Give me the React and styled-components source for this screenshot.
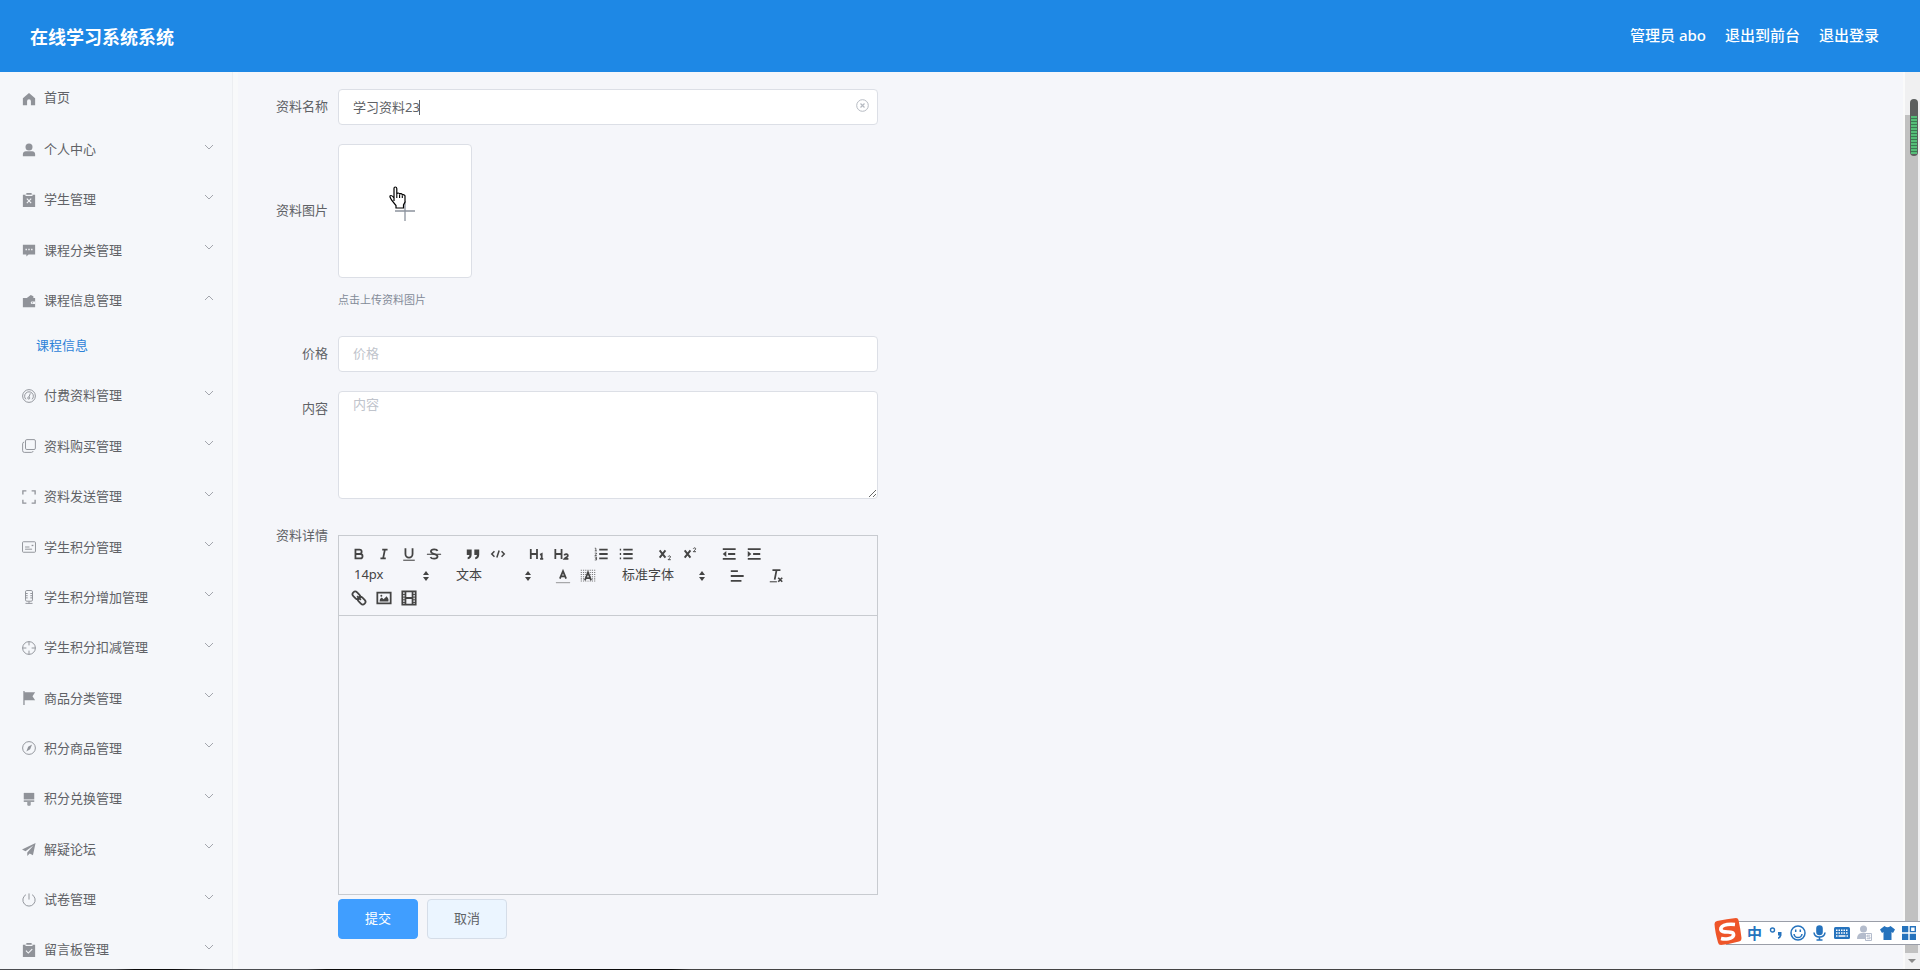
import React, { useState } from "react";
import styled, { createGlobalStyle, css } from "styled-components";

const GlobalStyle = createGlobalStyle`
    * {
        box-sizing: border-box;
    }

    body {
        margin: 0;
        background: #f5f7fa;
        color: #606266;
        font-family: "Noto Sans", "Noto Sans CJK SC", sans-serif;
        font-size: 13px;
        font-weight: 400;
    }

    button,
    input,
    textarea,
    select {
        font: inherit;
        color: inherit;
    }
`;

const Page = styled.div`
    position: relative;
    display: flex;
    flex-direction: column;
    height: 100vh;
    overflow: hidden;
`;

const Header = styled.header`
    display: flex;
    flex: none;
    align-items: center;
    justify-content: space-between;
    height: 72px;
    padding: 0 41px 0 30px;
    background: #1e88e5;
    color: #fff;
`;

const Title = styled.h1`
    margin: 0;
    font-size: 18px;
    font-weight: 700;
`;

const HeaderNav = styled.nav`
    display: flex;
    gap: 19px;
    padding-bottom: 3px;
    font-size: 15px;
    font-weight: 500;

    a {
        color: inherit;
        text-decoration: none;
    }
`;

const Body = styled.div`
    display: flex;
    flex: 1;
    min-height: 0;
`;

const Sidebar = styled.aside`
    flex: none;
    width: 238px;
    overflow: hidden;
    background: #f8f9fa;
`;

const Menu = styled.ul`
    display: flex;
    flex-direction: column;
    width: 233px;
    height: calc(100% + 5px);
    margin: 0;
    padding: 2px 0 0;
    border-right: 1px solid #eceef1;
    background: #f5f7fa;
    list-style: none;
`;

const MenuItem = styled.li`
    flex: 1 0 48px;
    display: flex;
`;

const SubItem = styled.li`
    flex: none;
    height: 45px;
    padding-left: 36px;
    line-height: 38px;

    a {
        color: #2d82d8;
        text-decoration: none;
    }
`;

const MenuButton = styled.button`
    display: flex;
    flex: 1;
    align-items: center;
    gap: 8px;
    padding: 0 18px 0 22px;
    border: 0;
    background: none;
    text-align: left;
    cursor: pointer;
`;

const MenuText = styled.span`
    flex: 1;
    padding-bottom: ${({ $raised }) => ($raised ? "6px" : "2px")};
`;

const MenuIcon = styled.svg`
    flex: none;
    width: 14px;
    height: 14px;
    color: #909399;
`;

const Chevron = styled.svg`
    width: 10px;
    height: 14px;
    padding-bottom: 6px;
    color: #a3a6ad;
    transform: ${({ $open }) => ($open ? "scaleY(-1) translateY(6px)" : "none")};
`;

const Main = styled.main`
    flex: 1;
    min-width: 0;
    padding: 17px 32px 0 32px;
    background: #f5f6fa;
`;

const Form = styled.form`
    display: flex;
    flex-direction: column;
    gap: 19px;
    max-width: 608px;
`;

const FormItem = styled.div`
    display: grid;
    grid-template-columns: 58px 1fr;
    column-gap: 10px;
    align-items: start;
`;

const Label = styled.label`
    line-height: ${({ $tall }) => ($tall ? "132px" : "34px")};
    text-align: right;
    white-space: nowrap;
`;

const InputBox = styled.div`
    position: relative;
`;

const fieldStyle = css`
    display: block;
    width: 100%;
    border: 1px solid #dcdfe6;
    border-radius: 4px;
    background: #fff;
    outline: none;

    &::placeholder {
        color: #c0c4cc;
        opacity: 1;
    }
`;

const Input = styled.input`
    ${fieldStyle}
    height: 36px;
    padding: 0 30px 2px 14px;
`;

const TextArea = styled.textarea`
    ${fieldStyle}
    height: 108px;
    padding: 2px 14px;
    line-height: 20px;
    resize: vertical;
`;

const Caret = styled.span`
    position: absolute;
    top: 11px;
    left: 81px;
    width: 1px;
    height: 15px;
    background: #606266;
`;

const ClearButton = styled.button`
    position: absolute;
    top: 10px;
    right: 9px;
    display: flex;
    padding: 0;
    border: 0;
    background: none;
    color: #b6bac2;
`;

const UploadTile = styled.label`
    position: relative;
    display: flex;
    align-items: center;
    justify-content: center;
    width: 134px;
    height: 134px;
    border: 1px solid #dcdfe6;
    border-radius: 4px;
    background: #fff;
    color: #8c939d;
    cursor: pointer;

    input {
        position: absolute;
        opacity: 0;
        pointer-events: none;
    }
`;

const HandCursor = styled.svg`
    position: absolute;
    top: 41px;
    left: 50px;
    width: 18px;
    height: 23px;
`;

const UploadTip = styled.div`
    margin-top: 12px;
    color: #838b98;
    font-size: 11px;
    line-height: 20px;
    padding-bottom: 7px;
`;

const Editor = styled.div`
    margin-top: 17px;
    border: 1px solid #c8cbd0;
    color: #444;
`;

const Toolbar = styled.div`
    padding: 7px 7px 6px;
    border-bottom: 1px solid #c8cbd0;
`;

const ToolbarRow = styled.div`
    display: flex;
    gap: 14px;
    height: 22px;
`;

const ToolGroup = styled.div`
    display: flex;
`;

const ToolButton = styled.button`
    display: flex;
    align-items: center;
    justify-content: center;
    width: 25px;
    height: 22px;
    padding: 0;
    border: 0;
    background: none;
    cursor: pointer;
`;

const Picker = styled.div`
    position: relative;
    width: ${({ $wide }) => ($wide ? "96px" : "88px")};

    select {
        width: 100%;
        height: 18px;
        padding: 0 20px 0 8px;
        border: 0;
        background: none;
        line-height: 18px;
        appearance: none;
        outline: none;
    }

    svg {
        position: absolute;
        top: 6px;
        right: 4px;
        pointer-events: none;
    }
`;

const EditArea = styled.div`
    height: 278px;
    outline: none;
`;

const Actions = styled.div`
    display: flex;
    gap: 9px;
    margin-top: 4px;
`;

const ActionButton = styled.button`
    width: 80px;
    height: 40px;
    padding: 0 0 4px;
    border: 1px solid ${({ $primary }) => ($primary ? "#409eff" : "#d5dde8")};
    border-radius: 4px;
    background: ${({ $primary }) => ($primary ? "#409eff" : "#ebf5ff")};
    color: ${({ $primary }) => ($primary ? "#fff" : "#606266")};
    cursor: pointer;
`;

const ScrollTrack = styled.div`
    display: flex;
    flex: none;
    flex-direction: column;
    align-items: center;
    width: 17px;
    padding: 43px 2px 7px 0;
    border-left: 2px solid #fafafa;
    background: #f0f0f1;
`;

const ScrollThumb = styled.div`
    flex: 1;
    width: 13px;
    margin-bottom: 6px;
    background: #c1c1c1;
`;

const BatteryPill = styled.div`
    position: absolute;
    top: 99px;
    right: 2px;
    width: 8px;
    height: 57px;
    padding: 17px 1px 2px;
    border-radius: 4px;
    background: #5c5f5e;

    &::before {
        content: "";
        display: block;
        height: 100%;
        background: repeating-linear-gradient(#55bd78 0 2px, #3a7a52 2px 3px);
    }
`;

const InputMethodBar = styled.div`
    position: absolute;
    right: 0;
    bottom: 25px;
    display: flex;
    align-items: center;
    justify-content: space-between;
    width: 194px;
    height: 24px;
    padding: 0 4px 0 21px;
    border: 1px solid #9a9ea8;
    border-width: 1px 0;
    background: #fff;
    color: #2673bd;

    svg {
        flex: none;
    }
`;

const ImeLogo = styled.svg`
    position: absolute;
    left: -13px;
    top: -5px;
`;

const ImeMode = styled.span`
    font-size: 15px;
    font-weight: 700;
    line-height: 22px;
`;

const TaskbarEdge = styled.div`
    position: absolute;
    right: 0;
    bottom: 0;
    left: 0;
    height: 1px;
    background: linear-gradient(90deg, #4a4c50 0 6%, #0b0b0b 7% 9%, #4a4c50 11% 16%, #0b0b0b 17% 35%, #444 36%);
`;

const line = { fill: "none", stroke: "currentColor", strokeWidth: 1.1 };

const icons = {
    home: <path fill="currentColor" d="M8 1 1 7v8h4.800v-4.500a2.200 2.200 0 0 1 4.400 0V15H15V7z" />,
    user: (
        <g fill="currentColor">
            <circle cx="8" cy="4.600" r="4" />
            <path d="M1 15v-2.500A3.500 3.500 0 0 1 4.500 9.500h7a3.500 3.500 0 0 1 3.500 3V15z" />
        </g>
    ),
    release: (
        <>
            <path fill="currentColor" d="M1 2h4V0h6v2h4v14H1z" />
            <path d="M4 2.700h8M5.500 6.500l5 5M10.500 6.500l-5 5" stroke="#f5f7fa" strokeWidth="1.300" />
        </>
    ),
    comment: (
        <>
            <path fill="currentColor" d="M1 2h14v11H7.500L5 15.500V13H1z" />
            <path d="M4 7.500h1.600M7.200 7.500h1.600M10.400 7.500H12" stroke="#f5f7fa" strokeWidth="1.600" />
        </>
    ),
    wallet: (
        <>
            <path fill="currentColor" d="M1 4.500h4.500L10 1l3 1.500v2h2V15H1z" />
            <path d="M15 8.500h-3.500a1.500 1.500 0 0 0 0 3H15" fill="#f5f7fa" />
            <circle cx="12" cy="10" r=".7" fill="currentColor" />
        </>
    ),
    odometer: (
        <g {...line}>
            <circle cx="8" cy="8" r="7.300" />
            <path d="M4.500 11.800A5 5 0 1 1 11.500 11.800" />
            <path d="M9.500 5 8 9" />
            <circle cx="7.700" cy="10.300" r="1.200" />
        </g>
    ),
    copy: (
        <g {...line}>
            <rect x="4" y=".7" width="11.300" height="11.300" rx="1.500" />
            <path d="M2.600 3.500Q.7 3.700.7 5.500v7.800q0 2 2 2h8q1.800 0 2-1.500" />
        </g>
    ),
    fullscreen: (
        <path {...line} strokeWidth="1.500" d="M1 5V1h4M11 1h4v4M15 11v4h-4M5 15H1v-4" />
    ),
    postcard: (
        <g {...line}>
            <rect x=".6" y="2" width="14.800" height="12" rx="1" />
            <path d="M3.500 8h5M3.500 10.500h8" />
            <path d="M11 5.500h2V7h-2z" fill="currentColor" stroke="none" />
        </g>
    ),
    microphone: (
        <g {...line}>
            <rect x="4" y=".6" width="8" height="12.200" rx="1.500" />
            <path d="M8 13v2.500M4 15.300h8M4 4h2.500M4 6.500h2.500M4 9h2.500M12 4H9.500M12 6.500H9.500M12 9H9.500" />
        </g>
    ),
    aim: (
        <g {...line}>
            <circle cx="8" cy="8" r="7.300" />
            <path d="M8 .7V5M8 11v4.300M.7 8H5M11 8h4.300" />
        </g>
    ),
    flag: <path fill="currentColor" d="M1.500 0H3v1.500h12L12 6l3 4.500H3V16H1.500z" />,
    compass: (
        <>
            <circle {...line} cx="8" cy="8" r="7.300" />
            <path fill="currentColor" d="M11.500 4 9.300 9.500 5 12l2-5.500z" />
        </>
    ),
    brush: (
        <g fill="currentColor">
            <path d="M2 1h12v7.500H2z" />
            <path d="M2 9.500h12v2h-4V15l-2 1-2-1v-3.500H2z" opacity=".9" />
        </g>
    ),
    promotion: <path fill="currentColor" d="M15.500 1 0 8.500l4 2L13 4l-7 8v4l2.800-3 3.700 2z" />,
    power: (
        <path {...line} d="M8 .5v7M4.500 1.900a7 7 0 1 0 7 0" />
    ),
    claim: (
        <>
            <path fill="currentColor" d="M1 2h4V0h6v2h4v14H1z" />
            <path d="M4 2.700h8M4.500 8.800l2.700 2.700 4.500-4.500" fill="none" stroke="#f5f7fa" strokeWidth="1.300" />
        </>
    )
};

const menu = [
    { text: "首页", icon: "home", single: true },
    { text: "个人中心", icon: "user" },
    { text: "学生管理", icon: "release" },
    { text: "课程分类管理", icon: "comment" },
    { text: "课程信息管理", icon: "wallet", children: ["课程信息"] },
    { text: "付费资料管理", icon: "odometer" },
    { text: "资料购买管理", icon: "copy" },
    { text: "资料发送管理", icon: "fullscreen" },
    { text: "学生积分管理", icon: "postcard" },
    { text: "学生积分增加管理", icon: "microphone" },
    { text: "学生积分扣减管理", icon: "aim" },
    { text: "商品分类管理", icon: "flag" },
    { text: "积分商品管理", icon: "compass" },
    { text: "积分兑换管理", icon: "brush" },
    { text: "解疑论坛", icon: "promotion" },
    { text: "试卷管理", icon: "power" },
    { text: "留言板管理", icon: "claim" }
];

// editor icons share one 18x18 grid
const tools = {
    bold: <path d="M5 4h4.500a2.500 2.500 0 0 1 0 5H5zM5 9h5.500a2.500 2.500 0 0 1 0 5H5z" />,
    italic: <path d="M7 4h6M5 14h6M8 14l2-10" />,
    underline: (
        <>
            <path d="M5 2.500V9a4 4 0 0 0 8 0V2.500" />
            <path d="M2.500 16h13" strokeWidth="1.200" />
        </>
    ),
    strike: (
        <>
            <path d="M13 5.500C12 3 6 3 5.500 6c0 2 2 2.500 3.500 3s4 1 4 3c-.5 3-6.500 3-8 .5" />
            <path d="M1 9.300h16" strokeWidth="1.200" />
        </>
    ),
    quote: (
        <g fill="currentColor" stroke="none">
            <path d="M2 4h5.500v5.500Q7.500 14 3 15v-2.300q2-.7 2-2.700H2z" />
            <path d="M10.500 4H16v5.500q0 4.500-4.500 5.500v-2.300q2-.7 2-2.700h-3z" />
        </g>
    ),
    code: <path d="M5 6 2 9l3 3M13 6l3 3-3 3M10.300 5 7.700 13" strokeWidth="1.700" />,
    h1: <path d="M2 3.500v11M9 3.500v11M2 9h7M12.500 10l1.800-1v5.500M12.500 14.400H16" />,
    h2: <path d="M1.500 3.500v11M8.500 3.500v11M1.500 9h7M11.500 10.500c1-2 4.300-1.500 4 .5-.2 1.500-2.500 2-3.700 3.500h4.400" />,
    ordered: (
        <>
            <path d="M7 4h9.500M7 9h9.500M7 14h9.500" />
            <path d="M2 2.500h1.200v3M2 5.500h2.300M2 8h2v1L2 10.800h2.300M2 12.500h2v3.200H2M2.500 14H4" strokeWidth=".9" />
        </>
    ),
    bullet: <path d="M6 4h10.500M6 9h10.500M6 14h10.500M2 4h1.500M2 9h1.500M2 14h1.500" />,
    sub: (
        <>
            <path d="m3 5 6.500 8M9.500 5 3 13" strokeWidth="2.200" />
            <path d="M12.500 12c.5-1.500 3-1 2.700.4-.2 1-1.700 1.500-2.700 3h3" strokeWidth="1.100" />
        </>
    ),
    sup: (
        <>
            <path d="m3 5 6.500 8M9.500 5 3 13" strokeWidth="2.200" />
            <path d="M12.700 3c.5-1.500 3-1 2.700.4-.2 1-1.700 1.500-2.700 3h3" strokeWidth="1.100" />
        </>
    ),
    outdent: (
        <>
            <path d="M2 3.500h14.500M8 9h8M2 14.500h14.500" />
            <path d="m6 5.500-4 3.500 4 3.500z" fill="currentColor" stroke="none" />
        </>
    ),
    indent: (
        <>
            <path d="M2 3.500h14.500M8 9h8M2 14.500h14.500" />
            <path d="m2 5.500 4 3.500-4 3.500z" fill="currentColor" stroke="none" />
        </>
    ),
    color: (
        <>
            <path d="M5.500 12 9 3.500l3.500 8.500M6.500 9.500h5" />
            <path d="M1 16.500h16" strokeWidth="1.200" opacity=".5" />
        </>
    ),
    background: (
        <>
            <path d="M1.500 2v14M4 2v14M6.500 2v14M9 2v14M11.500 2v14M14 2v14M16.500 2v14" strokeWidth="1.300" strokeDasharray="1.200 1.200" opacity=".7" />
            <path d="M9 3 4.500 14h9z" fill="#f5f6fa" stroke="none" />
            <path d="M5.500 14 9 5l3.500 9M6.500 11.500h5" />
        </>
    ),
    align: <path d="M2 3.500h8M2 9h14.500M2 14.500h12" />,
    clean: (
        <>
            <path d="M5 2.500h9M9.500 3 7.500 13" />
            <path d="M2 15.500h8" strokeWidth="1.200" />
            <path d="m11.500 11 4.500 4.500M16 11l-4.500 4.500" strokeWidth="1.900" />
        </>
    ),
    link: (
        <g transform="rotate(45 9 9)">
            <rect x="0" y="6" width="9.500" height="6" rx="3" />
            <rect x="8.500" y="6" width="9.500" height="6" rx="3" />
            <path d="M6 9h6" />
        </g>
    ),
    image: (
        <>
            <path d="M1.500 3h15v12h-15z" />
            <path d="m4 13 .5-3 2-1.500 2 2L12 7l2 3v3z" fill="currentColor" stroke="none" />
            <circle cx="6" cy="6.500" r="1.100" fill="currentColor" stroke="none" />
        </>
    ),
    video: (
        <>
            <path d="M1.500 1.500h15v15h-15z" />
            <path d="M5 2v14M13 2v14M5 9h8" />
            <path d="M1.500 5H5M1.500 8H5M1.500 11H5M1.500 14H5M13 5h3.500M13 8h3.500M13 11h3.500M13 14h3.500" strokeWidth="1.100" />
        </>
    )
};

const firstRow = [
    [["bold", "加粗"], ["italic", "斜体"], ["underline", "下划线"], ["strike", "删除线"]],
    [["quote", "引用"], ["code", "代码"]],
    [["h1", "标题一"], ["h2", "标题二"]],
    [["ordered", "有序列表"], ["bullet", "无序列表"]],
    [["sub", "下标"], ["sup", "上标"]],
    [["outdent", "减少缩进"], ["indent", "增加缩进"]]
];

const Tools = ({ items }) => (
    <ToolGroup>
        {items.map(([name, label]) => (
            <ToolButton key={name} type="button" aria-label={label}>
                <svg width="16" height="16" viewBox="0 0 18 18" fill="none" stroke="currentColor" strokeWidth="2">
                    {tools[name]}
                </svg>
            </ToolButton>
        ))}
    </ToolGroup>
);

const ToolPicker = ({ label, value, wide }) => (
    <Picker $wide={wide}>
        <select aria-label={label} defaultValue={value}>
            <option>{value}</option>
        </select>
        <svg width="8" height="10" viewBox="0 0 8 10" fill="currentColor">
            <path d="M4 0 7 4H1zM4 10 1 6h6z" />
        </svg>
    </Picker>
);

const SideMenu = () => (
    <Sidebar>
        <Menu>
            {menu.map(({ text, icon, single, children }) => (
                <React.Fragment key={text}>
                    <MenuItem>
                        <MenuButton type="button">
                            <MenuIcon viewBox="0 0 16 16">{icons[icon]}</MenuIcon>
                            <MenuText $raised={single}>{text}</MenuText>
                            {!single && (
                                <Chevron viewBox="0 0 10 8" $open={!!children} fill="none" stroke="currentColor">
                                    <path d="m1 2 4 4 4-4" />
                                </Chevron>
                            )}
                        </MenuButton>
                    </MenuItem>
                    {children &&
                        children.map(el => (
                            <SubItem key={el}>
                                <a href="#course">{el}</a>
                            </SubItem>
                        ))}
                </React.Fragment>
            ))}
        </Menu>
    </Sidebar>
);

const RichEditor = () => (
    <Editor>
        <Toolbar>
            <ToolbarRow>
                {firstRow.map((items, idx) => (
                    <Tools key={idx} items={items} />
                ))}
            </ToolbarRow>
            <ToolbarRow>
                <ToolPicker label="字号" value="14px" />
                <ToolPicker label="段落" value="文本" />
                <Tools items={[["color", "文字颜色"], ["background", "背景颜色"]]} />
                <ToolPicker label="字体" value="标准字体" wide />
                <Tools items={[["align", "对齐"]]} />
                <Tools items={[["clean", "清除格式"]]} />
            </ToolbarRow>
            <ToolbarRow>
                <Tools items={[["link", "链接"], ["image", "图片"], ["video", "视频"]]} />
            </ToolbarRow>
        </Toolbar>
        <EditArea id="detail" role="textbox" aria-labelledby="detail-label" contentEditable suppressContentEditableWarning />
    </Editor>
);

const InputMethod = () => (
    <InputMethodBar>
        <ImeLogo width="29" height="29" viewBox="0 0 29 29">
            <path d="M4 4Q14 2 23 1q2 0 2.500 2 2 9 3 18 0 3-2.500 3.500Q17 27 8 28q-2.500 0-3-2.500Q2 15 1.500 7q0-2.500 2.500-3z" fill="#ee5529" />
            <path d="M22 7.500Q10 6.500 8 11c-1 4 3.500 4 7 4s6 .5 5.500 3.500C19.500 22 12 22.500 8 21.500" fill="none" stroke="#fff" strokeWidth="3.600" />
        </ImeLogo>
        <ImeMode>中</ImeMode>
        <svg width="13" height="14" viewBox="0 0 13 14" fill="none" stroke="currentColor">
            <circle cx="3.500" cy="4" r="2" strokeWidth="1.400" />
            <path d="M9 6h3.500v3.500Q12 12 9 13v-1.500q1.500-.8 1.500-2H9z" fill="currentColor" stroke="none" />
        </svg>
        <svg width="16" height="16" viewBox="0 0 16 16" fill="none" stroke="currentColor" strokeWidth="1.500">
            <circle cx="8" cy="8" r="7" />
            <path d="M4 9q.5 3.500 4 3.500T12 9M5.700 4.500v2.500M10.300 4.500v2.500" />
        </svg>
        <svg width="13" height="16" viewBox="0 0 13 16" fill="none" stroke="currentColor" strokeWidth="1.600">
            <rect x="4" y="1" width="5" height="8.500" rx="2.500" fill="currentColor" />
            <path d="M1 7.500q.5 4.500 5.500 4.500T12 7.500M6.500 12v3M3.500 15h6" />
        </svg>
        <svg width="16" height="12" viewBox="0 0 16 12">
            <rect width="16" height="12" rx="1.500" fill="currentColor" />
            <path d="M2 3.200h12M2 6h12" stroke="#fff" strokeWidth="1.500" strokeDasharray="1.500 1" />
            <path d="M2 9h1.500M4.500 9h7M12.500 9H14" stroke="#fff" strokeWidth="1.400" />
        </svg>
        <svg width="15" height="16" viewBox="0 0 15 16" fill="#b4bccc">
            <circle cx="6.500" cy="4" r="3.500" />
            <path d="M0 14q0-5 4-6h5q2 .5 3 2H8v4z" />
            <path d="M8.500 8.500h6v7h-6z" fill="#fff" stroke="#b4bccc" />
            <path d="M13.300 10.200H10v1.700h3v1.800H9.700" fill="none" stroke="#b4bccc" />
        </svg>
        <svg width="15" height="14" viewBox="0 0 15 14" fill="currentColor">
            <path d="M4.500 0q3 2.500 6 0L15 3.500l-2 3.500-1.500-1v8h-8V6L2 7 0 3.500z" />
        </svg>
        <svg width="14" height="14" viewBox="0 0 14 14" fill="currentColor">
            <path d="M0 0h6.300v6.300H0zM0 7.700h6.300V14H0zM7.700 7.700H14V14H7.700z" />
            <path d="M8.400.7h4.900v4.900H8.400z" fill="none" stroke="currentColor" strokeWidth="1.400" />
        </svg>
    </InputMethodBar>
);

const App = () => {
    const [name, setName] = useState("学习资料23");

    return (
        <Page>
            <GlobalStyle />
            <Header>
                <Title>在线学习系统系统</Title>
                <HeaderNav>
                    <span>管理员 abo</span>
                    <a href="#front">退出到前台</a>
                    <a href="#logout">退出登录</a>
                </HeaderNav>
            </Header>
            <Body>
                <SideMenu />
                <Main>
                    <Form onSubmit={e => e.preventDefault()}>
                        <FormItem>
                            <Label htmlFor="name">资料名称</Label>
                            <InputBox>
                                <Input id="name" value={name} placeholder="资料名称" onChange={e => setName(e.target.value)} />
                                <Caret />
                                <ClearButton type="button" aria-label="清空" onClick={() => setName("")}>
                                    <svg width="13" height="13" viewBox="0 0 13 13" fill="none" stroke="currentColor">
                                        <circle cx="6.500" cy="6.500" r="5.800" />
                                        <path d="m4.500 4.500 4 4M8.500 4.500l-4 4" strokeWidth="1.200" />
                                    </svg>
                                </ClearButton>
                            </InputBox>
                        </FormItem>
                        <FormItem>
                            <Label htmlFor="picture" $tall>资料图片</Label>
                            <div>
                                <UploadTile>
                                    <input id="picture" type="file" accept="image/*" tabIndex={-1} />
                                    <svg width="20" height="20" viewBox="0 0 20 20" stroke="currentColor" strokeWidth="1.300">
                                        <path d="M10 0v20M0 10h20" />
                                    </svg>
                                    <HandCursor viewBox="0 0 18 23">
                                        <path
                                            d="M5 15V2.500Q5 1 6.300 1t1.500 1.500V8q0-1 1.400-1t1.400 1.300q.2-.8 1.500-.6t1.200 1.500q.4-.7 1.600-.4T16 10v6l-1.500 3v3H7v-2.500L2.500 14 1 11q-.3-1.500 1-1.500T5 12z"
                                            fill="#fff"
                                            stroke="#000"
                                            strokeWidth="1.200"
                                        />
                                        <path d="M7.800 8v4M10.600 8.500V12M13.300 9.500V12" stroke="#000" strokeWidth="1.100" />
                                    </HandCursor>
                                </UploadTile>
                                <UploadTip>点击上传资料图片</UploadTip>
                            </div>
                        </FormItem>
                        <FormItem>
                            <Label htmlFor="price">价格</Label>
                            <Input id="price" placeholder="价格" />
                        </FormItem>
                        <FormItem>
                            <Label htmlFor="content">内容</Label>
                            <TextArea id="content" placeholder="内容" />
                        </FormItem>
                        <FormItem>
                            <Label as="span" id="detail-label">资料详情</Label>
                            <div>
                                <RichEditor />
                                <Actions>
                                    <ActionButton type="submit" $primary>提交</ActionButton>
                                    <ActionButton type="button">取消</ActionButton>
                                </Actions>
                            </div>
                        </FormItem>
                    </Form>
                </Main>
                <ScrollTrack>
                    <ScrollThumb />
                    <svg width="8" height="4" viewBox="0 0 8 4" fill="#8a8a8a">
                        <path d="M0 0h8L4 4z" />
                    </svg>
                </ScrollTrack>
            </Body>
            <BatteryPill />
            <InputMethod />
            <TaskbarEdge />
        </Page>
    );
};

export default App;
